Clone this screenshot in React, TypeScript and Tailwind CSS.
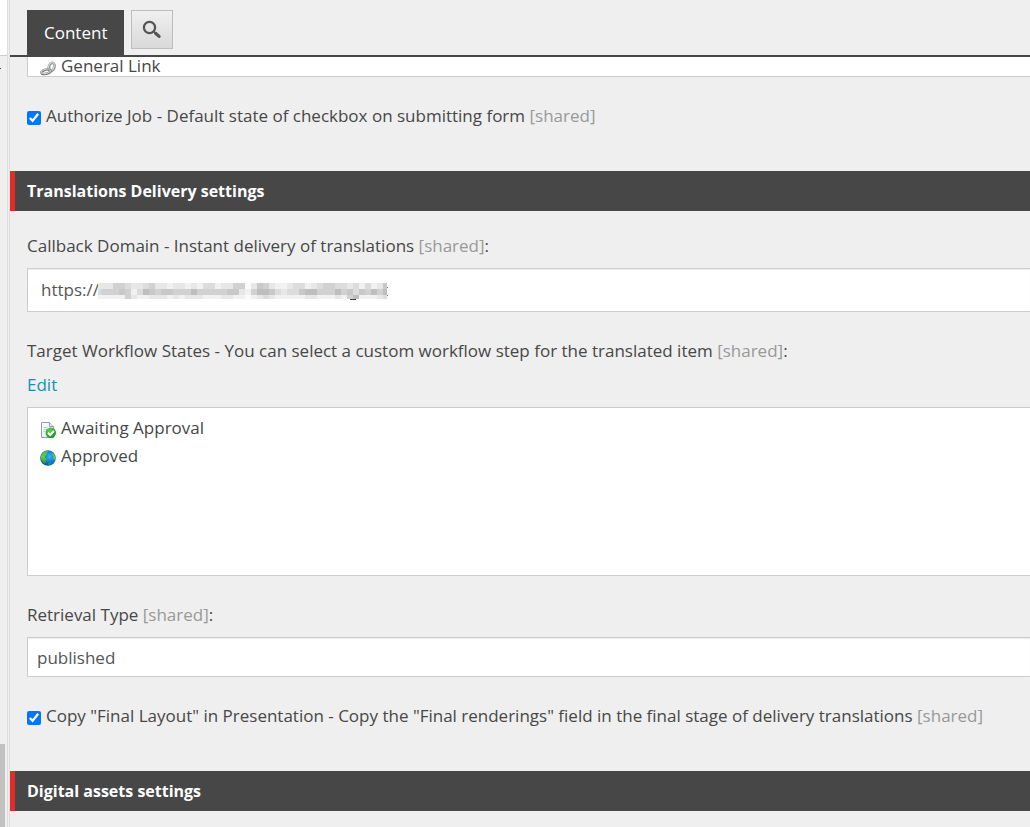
import { useState } from "react";
import type { ReactNode } from "react";

// grey levels of the masked host name, 0 = white, 6 = darkest
const maskRows = [
  "2224432234221221213312244025421123312344332313125",
  "3444541365455444644444552146653233566444645354646",
  "1111142112221212221112211012321111122111214611123",
];
const greys = ["#fbfbfb", "#f1f1f1", "#e7e7e7", "#dcdcdc", "#d1d1d1", "#c8c8c8", "#bebebe"];

const MaskedHost = () => (
  <svg
    className="mt-1 shrink-0"
    width="290"
    height="18"
    viewBox="0 0 290 18"
    shapeRendering="crispEdges"
    aria-hidden="true"
  >
    {maskRows.map((row, y) =>
      row.split("").map((level, x) => (
        <rect
          key={`${x}-${y}`}
          x={x === 0 ? 0 : x * 6 - 3}
          y={y * 6}
          width={x === 0 ? 3 : x === 48 ? 4 : 6}
          height={y === 2 ? 4 : 6}
          fill={greys[Number(level)]}
        />
      ))
    )}
    <path d="M252 16.5h6" stroke="#444" strokeWidth="1" />
    <path d="M289.5 4v1M289.5 12v1" stroke="#777" strokeWidth="1" />
  </svg>
);

const SearchIcon = () => (
  <svg width="20" height="20" viewBox="0 0 20 20" fill="none" stroke="#555" aria-hidden="true">
    <circle cx="7.5" cy="7.5" r="5.6" strokeWidth="2.3" />
    <path d="M11.8 11.8l2 1.8" strokeWidth="2" />
    <path d="M13.8 13.5l3.3 2.9" strokeWidth="3.2" strokeLinecap="round" />
  </svg>
);

const LinkIcon = () => (
  <svg width="16" height="16" viewBox="0 0 16 16" fill="none" aria-hidden="true">
    <ellipse cx="11.6" cy="6.9" rx="2.7" ry="4.2" transform="rotate(18 11.6 6.9)" stroke="#858585" strokeWidth="2.6" />
    <ellipse cx="11.3" cy="6.5" rx="2.7" ry="4.2" transform="rotate(18 11.3 6.5)" stroke="#cfcfcf" strokeWidth="1.4" />
    <ellipse cx="6" cy="11.8" rx="4.6" ry="2" transform="rotate(-12 6 11.8)" stroke="#777" strokeWidth="2.5" />
    <ellipse cx="5.8" cy="11.4" rx="4.6" ry="2" transform="rotate(-12 5.8 11.4)" stroke="#cdcdcd" strokeWidth="1.3" />
    <path d="M7 9.8l3-1.4" stroke="#aaa" strokeWidth="2" strokeLinecap="round" />
  </svg>
);

const AwaitingIcon = () => (
  <svg width="16" height="16" viewBox="0 0 16 16" aria-hidden="true">
    <defs>
      <linearGradient id="page" x1="0" y1="0" x2="1" y2="1">
        <stop offset="0" stopColor="#ffffff" />
        <stop offset="1" stopColor="#d5deef" />
      </linearGradient>
      <radialGradient id="tick" cx="0.4" cy="0.3" r="0.8">
        <stop offset="0" stopColor="#61d653" />
        <stop offset="1" stopColor="#078b12" />
      </radialGradient>
    </defs>
    <path d="M1.5.5h8l4 4v11h-12z" fill="url(#page)" stroke="#909bb9" />
    <path d="M9.5.5v4h4" fill="#e8edf8" stroke="#909bb9" />
    <path d="M3.5 5.5h4M3.5 7.5h4M3.5 9.5h2" stroke="#c0c8da" />
    <circle cx="10.8" cy="10.8" r="5.2" fill="url(#tick)" />
    <path d="M8 10.8l2.2 2.2 3.7-4" fill="none" stroke="#fff" strokeWidth="2" />
  </svg>
);

const GlobeIcon = () => (
  <svg width="16" height="16" viewBox="0 0 16 16" aria-hidden="true">
    <defs>
      <radialGradient id="sea" cx="0.6" cy="0.4" r="0.65">
        <stop offset="0" stopColor="#35b4f6" />
        <stop offset="0.6" stopColor="#0b77d2" />
        <stop offset="1" stopColor="#0a4f9c" />
      </radialGradient>
      <linearGradient id="land" x1="0" y1="0" x2="0" y2="1">
        <stop offset="0" stopColor="#69a860" />
        <stop offset="0.5" stopColor="#5fd22f" />
        <stop offset="1" stopColor="#2b8a4a" />
      </linearGradient>
    </defs>
    <circle cx="8" cy="8" r="7.8" fill="url(#sea)" />
    <path
      d="M.9 6C1.8 3 4.4.8 7.5.5l1 1-1.8 1.3.4 1.4L5.2 5.8 4.8 7.5l1.7 1.3.2 1.8-2 3.2C2.3 12.5.6 10 .9 6z"
      fill="url(#land)"
    />
    <path d="M12.6 2.4c1.7 1.4 2.7 3.4 2.7 5.6l-1.1 2.2-1.2-2 .3-2.1-1.5-1.3zM8.5 13.2l3-.8-1.6 2.3-1.8.4z" fill="url(#land)" />
  </svg>
);

const Shared = () => <span className="text-[#999999]">[shared]</span>;

const SectionTitle = ({ children }: { children: ReactNode }) => (
  <h2 className="flex h-10 items-center border-l-5 border-[#e42b27] bg-[#474747] pl-3 text-base font-bold text-white">
    {children}
  </h2>
);

const CheckRow = ({ id, children }: { id: string; children: ReactNode }) => {
  const [checked, setChecked] = useState(true);

  return (
    <div className="mt-[27px] mb-[43px] flex items-center gap-[5px] pl-[17px]">
      <input
        id={id}
        type="checkbox"
        checked={checked}
        onChange={() => setChecked(!checked)}
        className="mt-[3px] size-[14px] accent-[#0075ff]"
      />
      <label htmlFor={id}>{children}</label>
    </div>
  );
};

const App = () => {
  const [domain, setDomain] = useState("https://");
  const [retrieval, setRetrieval] = useState("published");

  return (
    <div className="flex h-screen overflow-hidden bg-[#efefef] font-['Open_Sans',sans-serif] text-[17px] leading-6 text-[#474747]">
      <aside className="flex w-[10px] shrink-0">
        <div className="flex w-[7px] flex-col">
          <div className="h-14 border-b border-[#cccccc] bg-white" />
          <div className="mt-3 h-px w-px bg-[#474747]" />
          <div className="mt-auto h-[83px] w-[5px] bg-[#c1c1c1]" />
        </div>
        <div className="w-[3px] border-x border-[#dddddd]" />
      </aside>

      <main className="min-w-0 flex-1">
        <header className="flex h-[57px] items-start gap-[7px] border-b-2 border-[#474747] pt-[10px] pl-[17px]">
          <button className="h-[45px] bg-[#474747] px-[17px] text-white">Content</button>
          <button
            aria-label="Search"
            className="flex h-[39px] w-[42px] items-center justify-center border border-[#bdbdbd] bg-linear-to-b from-[#f0f0f0] to-[#d9d9d9]"
          >
            <SearchIcon />
          </button>
        </header>

        <div className="ml-[17px] flex h-5 items-start gap-[5px] border-b border-l border-[#cccccc] bg-white pl-3 leading-[18px]">
          <div className="pt-[3px]">
            <LinkIcon />
          </div>
          General Link
        </div>

        <CheckRow id="authorize">
          Authorize Job - Default state of checkbox on submitting form <Shared />
        </CheckRow>

        <SectionTitle>Translations Delivery settings</SectionTitle>

        <div className="pt-[23px] pl-[17px]">
          <label htmlFor="domain" className="block">
            Callback Domain - Instant delivery of translations <Shared />:
          </label>
          <div className="mt-[10px] flex h-11 items-center border border-r-0 border-[#cccccc] bg-white pl-[13px] shadow-[inset_0_1px_1px_#00000013]">
            <input
              id="domain"
              value={domain}
              onChange={(e) => setDomain(e.target.value)}
              className="w-[57px] text-[#555555] outline-none"
            />
            <MaskedHost />
          </div>

          <p className="mt-[27px]">
            Target Workflow States - You can select a custom workflow step for the translated item <Shared />:
          </p>
          <a href="#edit" className="mt-[10px] block text-[#1291b5]">
            Edit
          </a>
          <ul className="mt-[10px] h-[169px] border border-r-0 border-[#cccccc] bg-white pt-[6px] pl-3">
            <li className="flex h-7 items-center gap-[5px]">
              <div className="pt-[3px]">
                <AwaitingIcon />
              </div>
              Awaiting Approval
            </li>
            <li className="flex h-7 items-center gap-[5px]">
              <div className="pt-[3px]">
                <GlobeIcon />
              </div>
              Approved
            </li>
          </ul>

          <label htmlFor="retrieval" className="mt-[27px] block">
            Retrieval Type <Shared />:
          </label>
          <input
            id="retrieval"
            value={retrieval}
            onChange={(e) => setRetrieval(e.target.value)}
            className="mt-[10px] block h-10 w-full border border-r-0 border-[#cccccc] bg-white pl-[9px] text-[#555555] shadow-[inset_0_1px_1px_#00000013] outline-none"
          />
        </div>

        <CheckRow id="copy-layout">
          Copy "Final Layout" in Presentation - Copy the "Final renderings" field in the final stage of delivery
          translations <Shared />
        </CheckRow>

        <SectionTitle>Digital assets settings</SectionTitle>
      </main>
    </div>
  );
};

export default App;
